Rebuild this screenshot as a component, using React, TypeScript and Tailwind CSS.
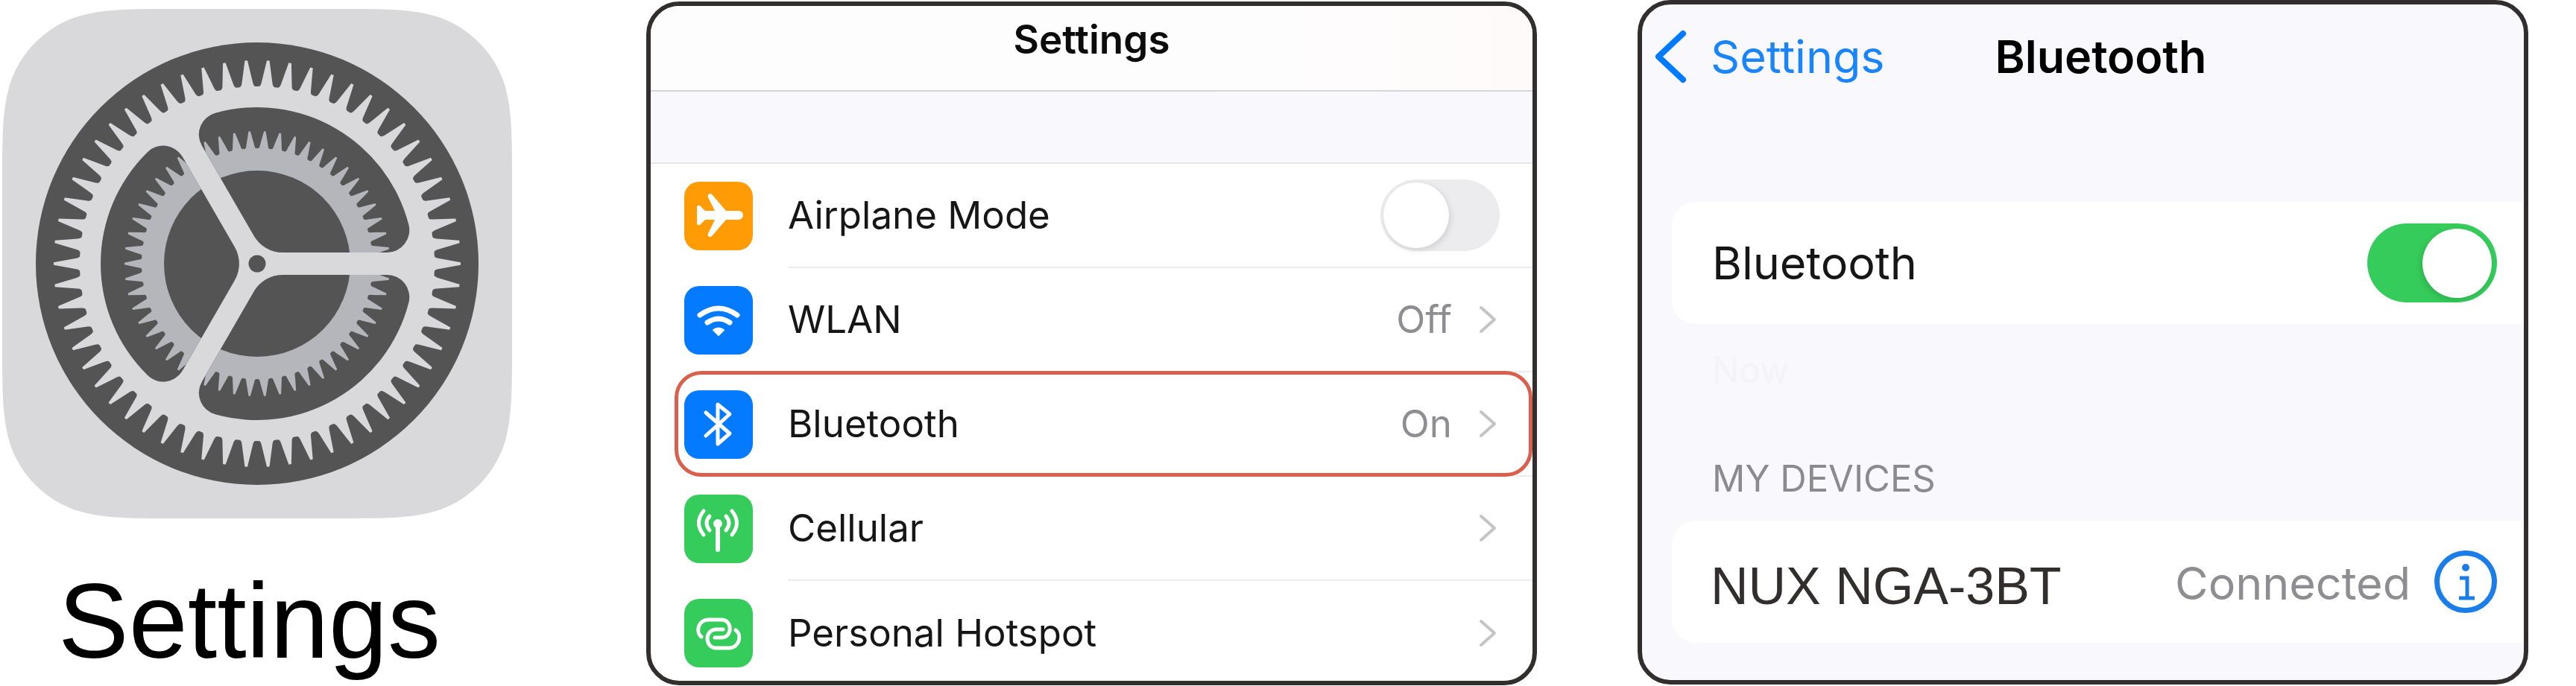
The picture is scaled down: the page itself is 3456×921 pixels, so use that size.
import React, { useState } from 'react';

type IconName = 'airplane' | 'wifi' | 'bluetooth' | 'cellular' | 'hotspot';

interface SettingsRow {
  icon: IconName;
  label: string;
  tile: string;
  value?: string;
  highlighted?: boolean;
}

const rows: SettingsRow[] = [
  { icon: 'wifi', label: 'WLAN', tile: 'bg-[#047aff]', value: 'Off' },
  { icon: 'bluetooth', label: 'Bluetooth', tile: 'bg-[#047aff]', value: 'On', highlighted: true },
  { icon: 'cellular', label: 'Cellular', tile: 'bg-[#35cc5b]' },
  { icon: 'hotspot', label: 'Personal Hotspot', tile: 'bg-[#35cc5b]' },
];

// Closed outline of a toothed wheel centred on 0,0
function gearPath(teeth: number, tip: number, valley: number) {
  const step = (Math.PI * 2) / teeth;
  const point = (radius: number, angle: number) =>
    `${(radius * Math.cos(angle)).toFixed(2)} ${(radius * Math.sin(angle)).toFixed(2)}`;
  let d = '';
  for (let i = 0; i < teeth; i++) {
    const a = i * step;
    d += `${i === 0 ? 'M' : 'L'}${point(tip, a - step * 0.06)} L${point(tip, a + step * 0.06)} `;
    d += `L${point(valley + 5, a + step * 0.28)} Q${point(valley, a + step * 0.32)} ${point(valley, a + step * 0.42)} `;
    d += `L${point(valley, a + step * 0.58)} Q${point(valley, a + step * 0.68)} ${point(valley + 5, a + step * 0.72)} `;
  }
  return `${d}Z`;
}

const SLOT =
  'M34.7 -15 H174.3 A30 30 0 0 0 203.3 -52.5 A210 210 0 0 0 -56.2 -202.3 A30 30 0 0 0 -74.2 -158.4 L-4.3 -37.5 A45 45 0 0 0 34.7 -15Z';
const SLOT_ANGLES = [0, 120, 240];

function GearIcon() {
  return (
    <svg viewBox="0 0 684 684" className="w-[684px] max-w-full" role="img" aria-label="Settings app icon">
      <defs>
        <clipPath id="slots">
          {SLOT_ANGLES.map((angle) => (
            <path key={angle} d={SLOT} transform={`rotate(${angle})`} />
          ))}
        </clipPath>
      </defs>
      <path
        fill="#d9d9dc"
        d="M234 0 H450 C517 0 551 0 587 11.5 C627 26 658 57 672.500 97 C684 133 684 167 684 234 V450 C684 517 684 551 672.500 587 C658 627 627 658 587 672.500 C551 684 517 684 450 684 H234 C167 684 133 684 97 672.500 C57 658 26 627 11.500 587 C0 551 0 517 0 450 V234 C0 167 0 133 11.500 97 C26 57 57 26 97 11.500 C133 0 167 0 234 0Z"
      />
      <g transform="translate(342 342)">
        <circle r="297" fill="#545454" />
        <path d={gearPath(58, 273, 238)} fill="#d9d9dc" />
        {SLOT_ANGLES.map((angle) => (
          <path key={angle} d={SLOT} transform={`rotate(${angle})`} fill="#545454" />
        ))}
        <g clipPath="url(#slots)">
          <path d={gearPath(54, 178, 155)} fill="#b4b6bb" />
          <circle r="125" fill="#545454" />
        </g>
        <circle r="11.5" fill="#545454" />
      </g>
    </svg>
  );
}

function TileIcon({ name }: { name: IconName }) {
  return (
    <svg
      viewBox="0 0 92 92"
      className="size-[92px]"
      fill="none"
      stroke="white"
      strokeWidth="5"
      strokeLinecap="round"
      strokeLinejoin="round"
      aria-hidden="true"
    >
      {name === 'airplane' && (
        <path
          fill="white"
          stroke="none"
          d="M73 39 a6 6 0 0 1 0 12 H56 L38 72 q-2 3 -5 1.500 q-2 -1 -1 -4 L41 51 H28 L21 58 q-4 1 -4 -2 V34 q0 -3 4 -2 L28 39 H41 L32 21 q-1 -3 1 -4.500 q3 -1.500 5 1.500 L56 39Z"
        />
      )}
      {name === 'wifi' && (
        <>
          <path strokeWidth="7" d="M21 39 Q46 21 71 39" />
          <path strokeWidth="7" d="M31 49 Q46 39 61 49" />
          <path fill="white" strokeWidth="2" d="M39 59 Q46 54 53 59 L46 66Z" />
        </>
      )}
      {name === 'bluetooth' && <path d="M29 30 L61 58 L45 72 V19 L61 32 L29 61" />}
      {name === 'cellular' && (
        <>
          <circle cx="45" cy="39" r="6" fill="white" stroke="none" />
          <path strokeWidth="6" d="M45 40 V74" />
          <path d="M26 22 Q13 38 26 54 M34 29 Q26 38 34 48 M64 22 Q77 38 64 54 M56 29 Q64 38 56 48" />
        </>
      )}
      {name === 'hotspot' && (
        <path d="M23 51 C15 45 18 28 33 28 H50 C65 28 65 52 50 52 H41 M69 42 C78 48 74 66 60 66 H43 C27 66 27 41 43 41 H52" />
      )}
    </svg>
  );
}

function Chevron() {
  return (
    <svg viewBox="0 0 24 38" className="h-[38px] w-6" fill="none" stroke="#c4c4c6" strokeWidth="4" aria-hidden="true">
      <path strokeLinecap="round" strokeLinejoin="round" d="M3 3 L21 19 L3 35" />
    </svg>
  );
}

function SettingsPanel() {
  const [airplane, setAirplane] = useState(false);

  return (
    <section className="mt-0.5 overflow-hidden rounded-[44px] border-[6px] border-[#332e2e] bg-white">
      <header className="flex h-[115px] items-center justify-center border-b-2 border-[#d6d5da] bg-linear-to-r from-[#fdfdfe] via-[#fdfdfd] via-60% to-[#fefafa] pb-6">
        <h1 className="text-[53px] leading-[60px] font-semibold text-[#0c0c0c]">Settings</h1>
      </header>
      <div className="h-[97px] border-b-2 border-[#e6e6ea] bg-[#f8f8fd]" />
      <ul className="-mb-1.5">
        <li className="flex h-[140px] items-center gap-[47px] pl-[45px]">
          <div className="rounded-[20px] bg-[#ff9b05]">
            <TileIcon name="airplane" />
          </div>
          <div className="flex h-full flex-1 items-center justify-between border-b-2 border-[#ececee] pr-11">
            <label htmlFor="airplane" className="text-[51px] leading-[60px]">
              Airplane Mode
            </label>
            <input
              id="airplane"
              type="checkbox"
              role="switch"
              checked={airplane}
              onChange={(e) => setAirplane(e.target.checked)}
              className="flex h-24 w-40 appearance-none items-center rounded-full bg-[#ececee] px-1 before:size-[88px] before:rounded-full before:bg-white before:shadow-[2px_3px_8px_rgba(0,0,0,0.12)] checked:justify-end checked:bg-[#35cc5b]"
            />
          </div>
        </li>
        {rows.map((row, index) => (
          <li key={row.label} className="relative">
            <a href="#" className="flex h-[140px] items-center gap-[47px] pl-[45px]">
              <span className={`rounded-[20px] ${row.tile}`}>
                <TileIcon name={row.icon} />
              </span>
              <span
                className={`flex h-full flex-1 items-center pr-12 text-[51px] leading-[60px] ${
                  index < rows.length - 1 ? 'border-b-2 border-[#ececee]' : ''
                }`}
              >
                <span className="flex-1">{row.label}</span>
                {row.value && <span className="mr-9 text-[#8e8e92]">{row.value}</span>}
                <Chevron />
              </span>
            </a>
            {row.highlighted && (
              <span className="pointer-events-none absolute -top-0.5 right-0 bottom-0 left-8 rounded-[36px] border-[5px] border-[#d9604c]" />
            )}
          </li>
        ))}
      </ul>
    </section>
  );
}

function BluetoothPanel() {
  const [enabled, setEnabled] = useState(true);

  return (
    <section className="overflow-hidden rounded-[44px] border-[6px] border-[#332e2e] bg-[#f8f8fd] pl-10">
      <header className="-ml-6 flex h-[265px] items-start pt-8">
        <a href="#" className="flex items-center gap-8 text-[61px] leading-[76px] text-[#1a84fb]">
          <svg viewBox="0 0 44 72" className="h-[72px] w-11" fill="none" stroke="#007aff" strokeWidth="8" aria-hidden="true">
            <path strokeLinecap="round" strokeLinejoin="round" d="M39 5 L6 36 L39 67" />
          </svg>
          Settings
        </a>
        <h2 className="ml-[148px] text-[61px] leading-[76px] font-semibold text-black">Bluetooth</h2>
      </header>
      <div className="flex h-[164px] items-center justify-between rounded-l-[32px] bg-white pr-9 pl-[54px]">
        <label htmlFor="bluetooth" className="text-[61px] leading-[72px]">
          Bluetooth
        </label>
        <input
          id="bluetooth"
          type="checkbox"
          role="switch"
          checked={enabled}
          onChange={(e) => setEnabled(e.target.checked)}
          className="flex h-[106px] w-[174px] appearance-none items-center rounded-full bg-[#e9e9eb] px-[7px] before:size-[93px] before:rounded-full before:bg-white before:shadow-[-2px_3px_8px_rgba(0,0,0,0.15)] checked:justify-end checked:bg-[#35cc5b]"
        />
      </div>
      <p className="mt-8 pl-[54px] text-[48px] leading-[60px] text-[#f4f4f7]">Now</p>
      <h3 className="mt-[86px] pb-[26px] pl-[54px] text-[49px] leading-[60px] text-[#8a8a8f]">MY DEVICES</h3>
      <div className="flex h-[164px] items-center rounded-l-[32px] bg-white pr-9 pl-[52px]">
        <span className="flex-1 pt-3 font-['Liberation_Sans',Arial,sans-serif] text-[70px] leading-[80px] text-[#332e2e]">
          NUX NGA-3BT
        </span>
        <span className="mr-8 pt-1 text-[61px] leading-[72px] text-[#8e8e92]">Connected</span>
        <button type="button" aria-label="Device info">
          <svg viewBox="0 0 84 84" className="size-[84px]" fill="none" stroke="#1a7de8" aria-hidden="true">
            <circle cx="42" cy="42" r="38.5" strokeWidth="7" />
            <circle cx="42" cy="23" r="5" fill="#1a7de8" stroke="none" />
            <path strokeWidth="5" d="M34 37 H44 V64 M33 64 H54" />
          </svg>
        </button>
      </div>
      <div className="h-[50px]" />
    </section>
  );
}

export default function App() {
  return (
    <main className="grid min-h-screen grid-cols-[732fr_1195fr_1195fr] items-start gap-x-[135px] bg-white pr-16 font-['Inter',sans-serif] text-[#161616]">
      <figure className="pt-3 pl-[3px]">
        <GearIcon />
        <figcaption className="mt-[58px] pl-[75px] font-['Liberation_Sans',Arial,sans-serif] text-[142px] leading-[160px] text-black">
          Settings
        </figcaption>
      </figure>
      <SettingsPanel />
      <BluetoothPanel />
    </main>
  );
}
